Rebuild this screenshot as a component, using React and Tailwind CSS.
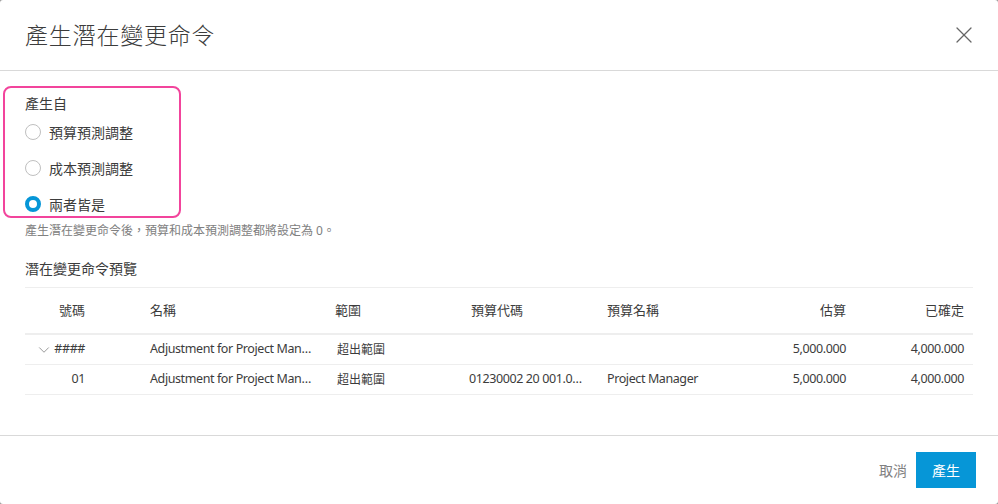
import { X, ChevronDown } from 'lucide-react';

const rows = [
  { id: '####', group: true, name: 'Adjustment for Project Man…', scope: '超出範圍', code: '', budget: '', estimate: '5,000.000', committed: '4,000.000' },
  { id: '01', group: false, name: 'Adjustment for Project Man…', scope: '超出範圍', code: '01230002 20 001.0…', budget: 'Project Manager', estimate: '5,000.000', committed: '4,000.000' },
];

const options = [
  { label: '預算預測調整', checked: false },
  { label: '成本預測調整', checked: false },
  { label: '兩者皆是', checked: true },
];

const cols = 'grid grid-cols-[110px_185px_136px_136px_136px_133px_114px]';

function Radio({ checked }) {
  return checked ? (
    <span className="box-border h-[16px] w-[16px] rounded-full border-[4px] border-[#0696d7] bg-white" />
  ) : (
    <span className="box-border h-[16px] w-[16px] rounded-full border border-[#bfbfbf] bg-white" />
  );
}

export default function App() {
  return (
    <div
      className="h-[504px] w-[998px] bg-[#9a9a9a] text-[#3c3c3c]"
      style={{ fontFamily: '"Noto Sans", "Noto Sans CJK TC", sans-serif' }}
    >
      <div className="relative flex h-full flex-col rounded-[3px] bg-white">
        {/* Header */}
        <div className="flex h-[71px] items-center justify-between border-b border-[#d9d9d9] pl-[25px] pr-[20px]">
          <h1 className="text-[23px] font-light leading-[30px] tracking-[0.8px] text-[#3c3c3c]">產生潛在變更命令</h1>
          <button className="flex h-[28px] w-[28px] shrink-0 items-center justify-center text-[#666]">
            <X className="h-[28px] w-[28px]" strokeWidth={1.1} />
          </button>
        </div>

        {/* Body */}
        <div className="px-[25px] pt-[23px]">
          <div className="text-[14px] leading-[20px]">產生自</div>
          {options.map((o) => (
            <label key={o.label} className="flex h-[36px] items-center gap-[8px] text-[14px]">
              <Radio checked={o.checked} />
              <span>{o.label}</span>
            </label>
          ))}
          <p className="text-[12px] leading-[18px] text-[#808080]">
            產生潛在變更命令後，預算和成本預測調整都將設定為 0。
          </p>

          <div className="mt-[19px] text-[14px] leading-[20px]">潛在變更命令預覽</div>

          <div className="mt-[8px] text-[13px]">
            <div className={`${cols} h-[48px] items-center border-t border-b-2 border-[#eeeeee]`}>
              <div className="pr-[50px] text-right">號碼</div>
              <div className="pl-[15px]">名稱</div>
              <div className="pl-[15px]">範圍</div>
              <div className="pl-[15px]">預算代碼</div>
              <div className="pl-[15px]">預算名稱</div>
              <div className="pr-[15px] text-right">估算</div>
              <div className="pr-[11px] text-right">已確定</div>
            </div>
            {rows.map((r) => (
              <div key={r.id} className={`${cols} h-[30px] items-center border-b border-[#eeeeee] text-[12.5px] tracking-[-0.4px]`}>
                <div className="flex items-center justify-end pr-[50px]">
                  {r.group && <ChevronDown className="mr-[1px] h-[18px] w-[18px] text-[#777]" strokeWidth={1} />}
                  <span>{r.id}</span>
                </div>
                <div className="whitespace-nowrap pl-[15px]">{r.name}</div>
                <div className="pl-[17px] text-[12px] tracking-normal">{r.scope}</div>
                <div className="whitespace-nowrap pl-[13px]">{r.code}</div>
                <div className="whitespace-nowrap pl-[15px]">{r.budget}</div>
                <div className="pr-[15px] text-right">{r.estimate}</div>
                <div className="pr-[11px] text-right">{r.committed}</div>
              </div>
            ))}
          </div>
        </div>

        {/* Footer */}
        <div className="mt-auto flex h-[69px] items-center justify-end gap-[9px] border-t border-[#d9d9d9] pr-[22px]">
          <button className="text-[14px] text-[#808080]">取消</button>
          <button className="h-[36px] w-[60px] bg-[#0696d7] text-[14px] text-white">產生</button>
        </div>

        {/* highlight annotation */}
        <div className="pointer-events-none absolute left-[3px] top-[86px] h-[132px] w-[178px] rounded-[8px] border-2 border-[#f2449c]" />
      </div>
    </div>
  );
}
